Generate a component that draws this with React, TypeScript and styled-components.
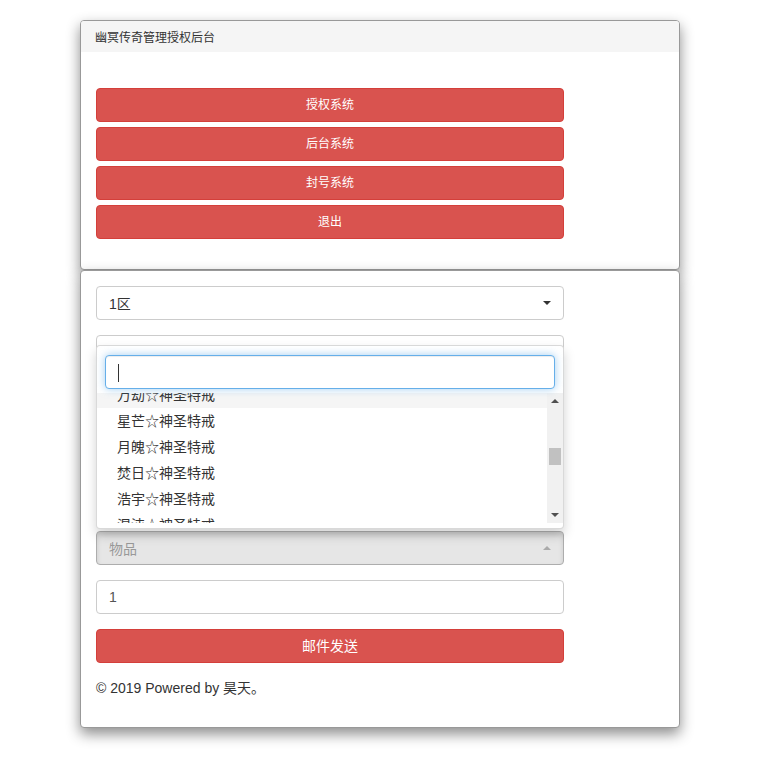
import React, { useLayoutEffect, useRef } from 'react';
import styled, { createGlobalStyle } from 'styled-components';

const GlobalStyle = createGlobalStyle`
  html, body {
    margin: 0;
    padding: 0;
    background: #fff;
  }
  body {
    font-family: "Liberation Sans", "Noto Sans CJK SC", sans-serif;
    font-size: 14px;
    color: #333;
  }
  * {
    box-sizing: border-box;
  }
`;

const Page = styled.div`
  padding: 20px 0 40px 80px;
`;

const Panel = styled.div`
  width: 600px;
  background: #fff;
  border: 1px solid #999;
  border-radius: 4px;
  box-shadow: 0 6px 14px rgba(0, 0, 0, 0.45);
  position: relative;
`;

const PanelHeading = styled.div`
  height: 31px;
  padding: 3px 14px 0;
  line-height: 28px;
  background: #f5f5f5;
  border-radius: 3px 3px 0 0;
  font-size: 12px;
  color: #333;
`;

const MenuBody = styled.div`
  padding: 36px 15px 30px;
  display: flex;
  flex-direction: column;
  gap: 5px;
`;

const FormBody = styled.div`
  padding: 15px 15px 29px;
  display: flex;
  flex-direction: column;
  gap: 15px;
`;

const DangerButton = styled.button<{ $size?: number }>`
  width: 468px;
  height: 34px;
  padding: 0;
  background: #d9534f;
  border: 1px solid #d43f3a;
  border-radius: 4px;
  color: #fff;
  font-family: inherit;
  font-size: ${props => props.$size ?? 14}px;
  line-height: 32px;
  text-align: center;
  cursor: pointer;
`;

const Field = styled.div`
  position: relative;
  width: 468px;
`;

const SelectButton = styled.div<{ $disabled?: boolean }>`
  height: 34px;
  padding: 0 12px;
  display: flex;
  align-items: center;
  justify-content: space-between;
  background: ${props => props.$disabled ? '#e6e6e6' : '#fff'};
  border: 1px solid ${props => props.$disabled ? '#adadad' : '#ccc'};
  border-radius: 4px;
  box-shadow: ${props => props.$disabled ? 'inset 0 3px 5px rgba(0,0,0,0.125)' : 'none'};
  color: ${props => props.$disabled ? '#999' : '#333'};
  font-size: 14px;
`;

const Caret = styled.span<{ $up?: boolean; $muted?: boolean }>`
  width: 0;
  height: 0;
  border-left: 4px solid transparent;
  border-right: 4px solid transparent;
  ${props => props.$up
    ? `border-bottom: 4px solid ${props.$muted ? '#aaa' : '#333'};`
    : `border-top: 4px solid ${props.$muted ? '#aaa' : '#333'};`}
`;

const TextInput = styled.input`
  width: 468px;
  height: 34px;
  padding: 0 12px;
  border: 1px solid #ccc;
  border-radius: 4px;
  font-family: inherit;
  font-size: 14px;
  color: #555;
  outline: none;
`;

const Footer = styled.p`
  margin: 0;
  line-height: 20px;
  font-size: 14px;
  color: #333;
`;

const DropMenu = styled.div`
  position: absolute;
  left: 0;
  right: 0;
  bottom: calc(100% + 2px);
  z-index: 10;
  padding: 5px 0;
  background: #fff;
  border: 1px solid rgba(0, 0, 0, 0.15);
  border-radius: 4px;
  box-shadow: 0 6px 12px rgba(0, 0, 0, 0.175);
`;

const SearchBox = styled.div`
  position: relative;
  padding: 4px 8px;
`;

const SearchInput = styled.input`
  width: 100%;
  height: 34px;
  padding: 0 12px;
  border: 1px solid #66afe9;
  border-radius: 4px;
  box-shadow: inset 0 1px 1px rgba(0, 0, 0, 0.075), 0 0 8px rgba(102, 175, 233, 0.6);
  font-family: inherit;
  font-size: 14px;
  outline: none;
`;

const FakeCursor = styled.span`
  position: absolute;
  left: 21px;
  top: 13px;
  width: 1px;
  height: 18px;
  background: #333;
`;

const ListWrap = styled.div`
  display: flex;
  height: 130px;
`;

const OptionList = styled.ul`
  flex: 1;
  list-style: none;
  margin: 0;
  padding: 0;
  overflow: hidden;
`;

const OptionItem = styled.li<{ $active?: boolean }>`
  padding: 3px 20px;
  line-height: 20px;
  height: 26px;
  white-space: nowrap;
  color: #333;
  background: ${props => props.$active ? '#f5f5f5' : 'transparent'};
`;

const ScrollBar = styled.div`
  width: 16px;
  display: flex;
  flex-direction: column;
  background: #f1f1f1;
`;

const ScrollArrow = styled.div<{ $up?: boolean }>`
  height: 16px;
  display: flex;
  align-items: center;
  justify-content: center;
  &::after {
    content: '';
    border-left: 4px solid transparent;
    border-right: 4px solid transparent;
    ${props => props.$up ? 'border-bottom: 4px solid #505050;' : 'border-top: 4px solid #505050;'}
  }
`;

const ScrollTrack = styled.div`
  flex: 1;
  padding: 0 2px;
`;

const ScrollThumb = styled.div`
  height: 17px;
  background: #c1c1c1;
`;

const prefixes = [
  '龙腾', '凤舞', '天罡', '地煞', '紫电', '青霜', '赤焰', '玄冰', '烈阳', '寒月', '破军',
  '万劫', '星芒', '月魄', '焚日', '浩宇', '混沌', '苍穹', '乾坤', '轩辕', '太初', '鸿蒙',
  '无极', '逍遥', '天启', '神威', '圣光', '幽冥', '噬魂',
];

const items = prefixes.map(p => `${p}☆神圣特戒`);

const ROW = 26;
const VIEW = 130;
const SCROLL = 11 * ROW + 11;

const ItemDropdown: React.FC = () => {
  const listRef = useRef<HTMLUListElement>(null);

  useLayoutEffect(() => {
    if (listRef.current) listRef.current.scrollTop = SCROLL;
  }, []);

  const total = items.length * ROW;
  const trackLen = VIEW - 32;
  const thumbTop = Math.round((SCROLL / (total - VIEW)) * (trackLen - 17));

  return (
    <DropMenu>
      <SearchBox>
        <SearchInput type="text" />
        <FakeCursor />
      </SearchBox>
      <ListWrap>
        <OptionList ref={listRef}>
          {items.map((name, i) => (
            <OptionItem key={name} $active={i === 11}>{name}</OptionItem>
          ))}
        </OptionList>
        <ScrollBar>
          <ScrollArrow $up />
          <ScrollTrack>
            <ScrollThumb style={{ marginTop: thumbTop }} />
          </ScrollTrack>
          <ScrollArrow />
        </ScrollBar>
      </ListWrap>
    </DropMenu>
  );
};

export default function App() {
  return (
    <>
      <GlobalStyle />
      <Page>
        <Panel>
          <PanelHeading>幽冥传奇管理授权后台</PanelHeading>
          <MenuBody>
            <DangerButton $size={12}>授权系统</DangerButton>
            <DangerButton $size={12}>后台系统</DangerButton>
            <DangerButton $size={12}>封号系统</DangerButton>
            <DangerButton $size={12}>退出</DangerButton>
          </MenuBody>
        </Panel>
        <Panel>
          <FormBody>
            <Field>
              <SelectButton>
                <span>1区</span>
                <Caret />
              </SelectButton>
            </Field>
            <Field>
              <SelectButton>
                <span>角色</span>
                <Caret />
              </SelectButton>
            </Field>
            <TextInput placeholder="角色名" />
            <DangerButton>查询</DangerButton>
            <Field>
              <SelectButton>
                <span>类型</span>
                <Caret />
              </SelectButton>
            </Field>
            <Field>
              <SelectButton $disabled>
                <span>物品</span>
                <Caret $up $muted />
              </SelectButton>
              <ItemDropdown />
            </Field>
            <TextInput defaultValue="1" />
            <DangerButton>邮件发送</DangerButton>
            <Footer>© 2019 Powered by 昊天。</Footer>
          </FormBody>
        </Panel>
      </Page>
    </>
  );
}
